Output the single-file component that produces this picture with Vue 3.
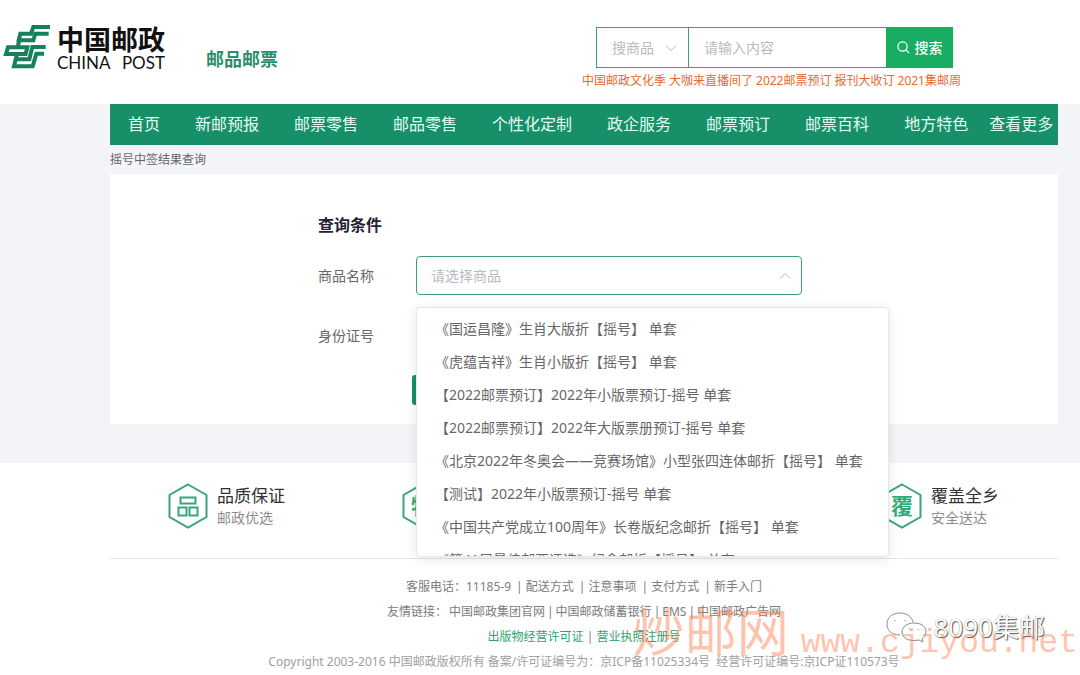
<script setup>
import { ref } from 'vue'

const keyword = ref('')
const hotWords = ['中国邮政文化季', '大咖来直播间了', '2022邮票预订', '报刊大收订', '2021集邮周']
const nav = ['首页', '新邮预报', '邮票零售', '邮品零售', '个性化定制', '政企服务', '邮票预订', '邮票百科', '地方特色']
const products = [
  '《国运昌隆》生肖大版折【摇号】 单套',
  '《虎蕴吉祥》生肖小版折【摇号】 单套',
  '【2022邮票预订】2022年小版票预订-摇号 单套',
  '【2022邮票预订】2022年大版票册预订-摇号 单套',
  '《北京2022年冬奥会——竞赛场馆》小型张四连体邮折【摇号】 单套',
  '【测试】2022年小版票预订-摇号 单套',
  '《中国共产党成立100周年》长卷版纪念邮折【摇号】 单套',
  '《第41届最佳邮票评选》纪念邮折【摇号】 单套',
]
const services = ['配送方式', '注意事项', '支付方式', '新手入门']
const friends = ['中国邮政集团官网', '中国邮政储蓄银行', 'EMS', '中国邮政广告网']
</script>

<template>
  <div class="page">
    <header class="header">
      <a class="brand" href="#" aria-label="中国邮政">
        <svg class="mark" viewBox="0 0 168 162" fill="none" stroke="#14805c" stroke-width="12">
          <path d="M150 21H100L93 41H61L56 61H100L106 41H146" />
          <path d="M58 61L53 82H24L18 102H51L42 139H98L109 101H132" />
          <path d="M137 81H97L88 118H49M53 82H82L77 102H51" />
        </svg>
        <span class="brand-text">
          <strong class="brand-cn">中国邮政</strong>
          <span class="brand-en"><span>CHINA</span><span>POST</span></span>
        </span>
      </a>
      <h1 class="site">邮品邮票</h1>
      <div class="search">
        <form class="search-bar" @submit.prevent>
          <span class="kind">
            <select aria-label="搜索类型">
              <option>搜商品</option>
            </select>
            <svg class="chevron" viewBox="0 0 12 12"><path d="M1 3.5L6 8.5L11 3.5" /></svg>
          </span>
          <input v-model="keyword" type="text" placeholder="请输入内容" aria-label="搜索内容" />
          <button type="submit">
            <svg viewBox="0 0 14 14"><circle cx="6" cy="6" r="5" /><path d="M9.7 9.7L13 13" /></svg>
            搜索
          </button>
        </form>
        <div class="hot">
          <a v-for="w in hotWords" :key="w" href="#">{{ w }}</a>
        </div>
      </div>
    </header>

    <main class="main">
      <nav class="nav">
        <a v-for="n in nav" :key="n" href="#">{{ n }}</a>
        <a class="more" href="#">查看更多</a>
      </nav>
      <p class="crumb">摇号中签结果查询</p>
      <section class="card">
        <h2>查询条件</h2>
        <div class="row">
          <label for="product">商品名称</label>
          <div class="field">
            <select id="product" class="box">
              <option>请选择商品</option>
            </select>
            <svg class="chevron" viewBox="0 0 12 12"><path d="M1 8.5L6 3.5L11 8.5" /></svg>
            <ul class="menu" role="listbox" aria-label="商品名称">
              <li v-for="p in products" :key="p" role="option">{{ p }}</li>
            </ul>
          </div>
        </div>
        <div class="row">
          <label for="idno">身份证号</label>
          <div class="field"><input id="idno" class="box plain" type="text" /></div>
        </div>
        <button class="query" type="button" aria-label="查询"></button>
      </section>
    </main>

    <footer class="footer">
      <div class="promises">
        <div class="promise">
          <svg class="hex" viewBox="0 0 40 46">
            <path d="M20 1.5L38.5 12V34L20 44.5L1.5 34V12Z" />
            <path d="M12.5 14.5h15v6h-15zM10.5 24.5h8v8h-8zM21.5 24.5h8v8h-8z" />
          </svg>
          <div><h3>品质保证</h3><p>邮政优选</p></div>
        </div>
        <div class="promise">
          <svg class="hex" viewBox="0 0 40 46">
            <path d="M20 1.5L38.5 12V34L20 44.5L1.5 34V12Z" />
            <text x="20" y="31">特</text>
          </svg>
        </div>
        <div class="promise">
          <svg class="hex" viewBox="0 0 40 46">
            <path d="M20 1.5L38.5 12V34L20 44.5L1.5 34V12Z" />
            <text x="20" y="31">覆</text>
          </svg>
          <div><h3>覆盖全乡</h3><p>安全送达</p></div>
        </div>
      </div>
      <div class="links">
        <p class="services">
          <span>客服电话：11185-9</span>
          <span v-for="s in services" :key="s">| <a href="#">{{ s }}</a></span>
        </p>
        <p class="friends">
          <span>友情链接：</span>
          <template v-for="(f, i) in friends" :key="f"><span v-if="i">|</span><a href="#">{{ f }}</a></template>
        </p>
        <p class="license"><a href="#">出版物经营许可证</a> | <a href="#">营业执照注册号</a></p>
        <p class="copy">Copyright 2003-2016 中国邮政版权所有 备案/许可证编号为：京ICP备11025334号 &nbsp;经营许可证编号:京ICP证110573号</p>
      </div>
      <div class="account">
        <svg viewBox="0 0 42 34">
          <path d="M15 25C5 25 2 19 2 14C2 7 8 3 15 3C22 3 27 7 28 12" />
          <path d="M29 13C37 13 41 17 41 22C41 25 39 27 37 29L38 32L34 30C24 32 17 28 17 22C17 17 22 13 29 13Z" />
          <path d="M10 10v1M20 10v1M25 19v1M33 19v1" />
        </svg>
        <span>8090集邮</span>
      </div>
      <div class="stamp"><span class="stamp-cn">炒邮网</span><span class="stamp-url">www.cjiyou.net</span></div>
    </footer>
  </div>
</template>

<style>
body {
  margin: 0;
  background: #fff;
  overflow: hidden;
}
</style>

<style scoped>
* {
  box-sizing: border-box;
}
.page {
  background: #f3f4f7;
  color: #65676b;
  font: 14px/20px "Noto Sans", "Noto Sans CJK SC", sans-serif;
}
a {
  color: inherit;
  text-decoration: none;
}
h1, h2, h3, p, ul {
  margin: 0;
  padding: 0;
}
button, input, select {
  font: inherit;
  border: 0;
  border-radius: 0;
  outline: 0;
}
.header {
  display: flex;
  align-items: flex-start;
  height: 104px;
  background: #fff;
}
.brand {
  display: flex;
  margin-top: 20px;
}
.mark {
  width: 56px;
  height: 54px;
}
.brand-text {
  color: #111;
  margin-left: 1px;
  width: 108px;
}
.brand-cn {
  display: block;
  font-size: 27px;
  line-height: 40px;
  font-weight: 700;
}
.brand-en {
  display: flex;
  justify-content: space-between;
  font: 17px/16px Lato, sans-serif;
  margin-top: -5px;
}
.site {
  margin: 48px 0 0 41px;
  font-size: 18px;
  line-height: 22px;
  color: #2a8f6c;
}
.search {
  margin: 27px 119px 0 auto;
  width: 379px;
}
.search-bar {
  display: flex;
  height: 41px;
  margin: 0 8px 0 14px;
}
.kind {
  position: relative;
  width: 93px;
  border: 1px solid #3d9c7e;
}
.kind select {
  appearance: none;
  width: 100%;
  height: 100%;
  padding: 0 0 0 15px;
  background: #fff;
  color: #b8bbc0;
}
.chevron {
  position: absolute;
  right: 11px;
  top: 50%;
  width: 12px;
  height: 12px;
  margin-top: -6px;
  fill: none;
  stroke: #b4b8bf;
}
.search-bar input {
  flex: 1;
  min-width: 0;
  padding: 0 15px;
  border: solid #3d9c7e;
  border-width: 1px 0;
}
::placeholder {
  color: #b8bbc0;
  opacity: 1;
}
.search-bar button {
  display: flex;
  align-items: center;
  justify-content: center;
  gap: 5px;
  width: 67px;
  padding: 0;
  background: #17ae64;
  color: #fff;
  font-weight: 500;
}
.search-bar button svg {
  width: 13px;
  height: 13px;
  fill: none;
  stroke: #fff;
  stroke-width: 1.3;
}
.hot {
  display: flex;
  justify-content: space-between;
  margin-top: 3px;
  font-size: 12px;
  line-height: 20px;
  white-space: nowrap;
  color: #e8692e;
}
.main {
  padding: 0 22px 39px 110px;
}
.nav {
  display: flex;
  gap: 35px;
  height: 41px;
  padding-left: 18px;
  background: #17906a;
  color: #e4fbf1;
  font-size: 16px;
  line-height: 41px;
  white-space: nowrap;
}
.nav .more {
  margin-left: -14px;
}
.crumb {
  font-size: 12px;
  line-height: 29px;
  color: #666;
}
.card {
  height: 250px;
  padding: 39px 0 0 208px;
  background: #fff;
}
.card h2 {
  font-size: 16px;
  line-height: 24px;
  color: #1f2433;
}
.row {
  display: flex;
  align-items: center;
  height: 39px;
  margin-top: 21px;
}
.row:first-of-type {
  margin-top: 19px;
}
.row label {
  width: 98px;
}
.field {
  position: relative;
  width: 386px;
  height: 39px;
}
.box {
  appearance: none;
  width: 100%;
  height: 100%;
  padding: 0 14px;
  border: 1px solid #3d9c7e;
  border-radius: 4px;
  background: #fff;
  color: #b8bbc0;
}
.plain {
  border-color: #dcdfe6;
}
.menu {
  position: absolute;
  z-index: 5;
  top: 51px;
  left: 0;
  width: 473px;
  height: 250px;
  padding: 4px 0;
  overflow: hidden;
  list-style: none;
  background: #fff;
  border: 1px solid #e4e7ed;
  border-radius: 4px;
  box-shadow: 0 2px 12px rgba(0, 0, 0, 0.1);
  white-space: nowrap;
}
.menu li {
  padding-left: 18px;
  line-height: 33px;
}
.query {
  display: block;
  width: 96px;
  height: 30px;
  margin: 20px 0 0 94px;
  border-radius: 3px;
  background: #17906a;
}
.footer {
  position: relative;
  padding: 0 22px 0 110px;
  background: #fff;
}
.promises {
  display: grid;
  grid-template-columns: 234fr 480fr 176fr;
  height: 96px;
  padding: 20px 0 0 58px;
  border-bottom: 1px solid #e6e6e6;
}
.promise {
  display: flex;
  gap: 9px;
}
.promise h3 {
  font-size: 17px;
  line-height: 26px;
  font-weight: 400;
  color: #333;
}
.promise p {
  font-size: 14px;
  line-height: 18px;
  color: #8c8c8c;
}
.hex {
  width: 40px;
  height: 46px;
  fill: none;
  stroke: #3aa57c;
  stroke-width: 2;
}
.hex text {
  fill: #2fae78;
  stroke: none;
  font-size: 22px;
  font-weight: 700;
  text-anchor: middle;
}
.links {
  padding-top: 15px;
  text-align: center;
  font-size: 12px;
  line-height: 25px;
  white-space: nowrap;
  color: #7c7c7c;
}
.services,
.friends {
  display: flex;
  justify-content: center;
  gap: 5px;
}
.friends {
  gap: 2px;
}
.license a {
  color: #2fa36f;
}
.links .copy {
  color: #a0a0a0;
}
.account {
  position: absolute;
  right: 35px;
  bottom: 29px;
  display: flex;
  align-items: center;
  gap: 7px;
  font-size: 26px;
  line-height: 36px;
  color: #fff;
  text-shadow: 1px 1px 1px #555, 0 0 1px #888;
}
.account svg {
  width: 42px;
  height: 34px;
  fill: none;
  stroke: #8b8b8b;
}
.stamp {
  position: absolute;
  right: 2px;
  bottom: 0;
  display: flex;
  align-items: baseline;
  gap: 12px;
  color: rgba(255, 120, 70, 0.45);
  line-height: 60px;
  white-space: nowrap;
}
.stamp-cn {
  font-size: 52px;
}
.stamp-url {
  font-family: "Liberation Mono", monospace;
  font-size: 33px;
}
</style>
